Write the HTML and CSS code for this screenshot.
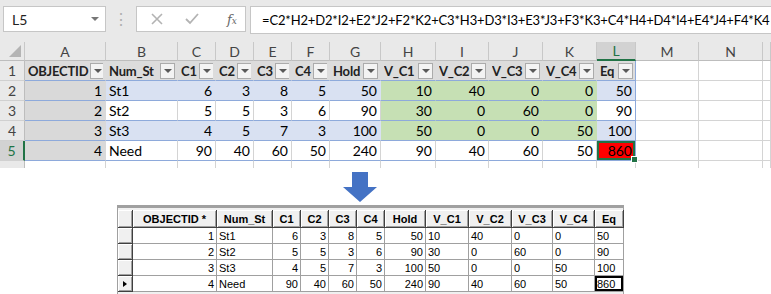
FILE: index.html
```html
<!DOCTYPE html>
<html lang="en">
  <head>
    <meta charset="UTF-8" />
    <title>Excel to Attribute Table</title>
    <link rel="stylesheet" href="styles.css">
  </head>
  <body>
    <div class="topbar">
      <div class="namebox">
        <span>L5</span>
        <span class="caret"></span>
      </div>
      <div class="dots">&#8942;</div>
      <div class="fxbox">
        <svg class="icon" width="12" height="12" viewBox="0 0 12 12">
          <path d="M1 1 L11 11 M11 1 L1 11" stroke="#b3b3b3" stroke-width="1.6" fill="none" />
        </svg>
        <svg class="icon" width="14" height="12" viewBox="0 0 14 12">
          <path d="M1 6 L5 10 L13 1" stroke="#b3b3b3" stroke-width="1.8" fill="none" />
        </svg>
        <span class="fx">f<sub>x</sub></span>
      </div>
      <div class="formula">=C2*H2+D2*I2+E2*J2+F2*K2+C3*H3+D3*I3+E3*J3+F3*K3+C4*H4+D4*I4+E4*J4+F4*K4</div>
    </div>

    <div class="sheet">
      <table class="grid">
        <colgroup>
          <col style="width: 25px" /><col style="width: 81px" /><col style="width: 72px" />
          <col style="width: 38px" /><col style="width: 38px" /><col style="width: 38px" />
          <col style="width: 38px" /><col style="width: 51px" /><col style="width: 55px" />
          <col style="width: 53px" /><col style="width: 54px" /><col style="width: 54px" />
          <col style="width: 39px" /><col style="width: 63px" /><col style="width: 64px" />
          <col style="width: 8px" />
        </colgroup>
        <tr class="colhdr">
          <th class="corner"><span class="tri"></span></th>
          <th>A</th><th>B</th><th>C</th><th>D</th><th>E</th><th>F</th><th>G</th>
          <th>H</th><th>I</th><th>J</th><th>K</th><th class="active">L</th><th>M</th><th>N</th><th></th>
        </tr>
        <tr class="head">
          <th class="rowhdr">1</th>
          <td class="fh"><div class="fhc">OBJECTID<span class="filter"></span></div></td>
          <td class="fh"><div class="fhc">Num_St<span class="filter"></span></div></td>
          <td class="fh"><div class="fhc">C1<span class="filter"></span></div></td>
          <td class="fh"><div class="fhc">C2<span class="filter"></span></div></td>
          <td class="fh"><div class="fhc">C3<span class="filter"></span></div></td>
          <td class="fh"><div class="fhc">C4<span class="filter"></span></div></td>
          <td class="fh"><div class="fhc">Hold<span class="filter"></span></div></td>
          <td class="fh"><div class="fhc">V_C1<span class="filter"></span></div></td>
          <td class="fh"><div class="fhc">V_C2<span class="filter"></span></div></td>
          <td class="fh"><div class="fhc">V_C3<span class="filter"></span></div></td>
          <td class="fh"><div class="fhc">V_C4<span class="filter"></span></div></td>
          <td class="fh last"><div class="fhc">Eq<span class="filter"></span></div></td>
          <td></td><td></td><td></td>
        </tr>
        <tr class="band">
          <th class="rowhdr">2</th>
          <td class="id num">1</td><td>St1</td>
          <td class="num">6</td><td class="num">3</td><td class="num">8</td><td class="num">5</td><td class="num">50</td>
          <td class="num v">10</td><td class="num v">40</td><td class="num v">0</td><td class="num v">0</td>
          <td class="num last">50</td>
          <td></td><td></td><td></td>
        </tr>
        <tr class="plain">
          <th class="rowhdr">3</th>
          <td class="id num">2</td><td>St2</td>
          <td class="num">5</td><td class="num">5</td><td class="num">3</td><td class="num">6</td><td class="num">90</td>
          <td class="num v">30</td><td class="num v">0</td><td class="num v">60</td><td class="num v">0</td>
          <td class="num last">90</td>
          <td></td><td></td><td></td>
        </tr>
        <tr class="band">
          <th class="rowhdr">4</th>
          <td class="id num">3</td><td>St3</td>
          <td class="num">4</td><td class="num">5</td><td class="num">7</td><td class="num">3</td><td class="num">100</td>
          <td class="num v">50</td><td class="num v">0</td><td class="num v">0</td><td class="num v">50</td>
          <td class="num last">100</td>
          <td></td><td></td><td></td>
        </tr>
        <tr class="plain">
          <th class="rowhdr active">5</th>
          <td class="id num">4</td><td>Need</td>
          <td class="num">90</td><td class="num">40</td><td class="num">60</td><td class="num">50</td><td class="num">240</td>
          <td class="num">90</td><td class="num">40</td><td class="num">60</td><td class="num">50</td>
          <td class="num last sel">860</td>
          <td></td><td></td><td></td>
        </tr>
        <tr class="empty">
          <th class="rowhdr"></th>
          <td></td><td></td><td></td><td></td><td></td><td></td><td></td><td></td>
          <td></td><td></td><td></td><td></td><td></td><td></td><td></td>
        </tr>
      </table>
    </div>

    <div class="lower">
      <svg class="arrow" width="34" height="30" viewBox="0 0 34 30">
        <polygon points="9,0 25,0 25,15 34,15 17,30 0,15 9,15" fill="#4472c4" />
      </svg>

      <div class="att-frame">
        <table class="att">
          <colgroup>
            <col style="width: 15px" /><col style="width: 84px" /><col style="width: 56px" />
            <col style="width: 28px" /><col style="width: 28px" /><col style="width: 28px" />
            <col style="width: 28px" /><col style="width: 41px" /><col style="width: 43px" />
            <col style="width: 43px" /><col style="width: 41px" /><col style="width: 42px" />
            <col style="width: 29px" />
          </colgroup>
          <tr>
            <th class="sel-col"></th>
            <th>OBJECTID *</th><th>Num_St</th><th>C1</th><th>C2</th><th>C3</th><th>C4</th>
            <th>Hold</th><th>V_C1</th><th>V_C2</th><th>V_C3</th><th>V_C4</th><th>Eq</th>
          </tr>
          <tr>
            <th class="sel-col"></th>
            <td class="num">1</td><td>St1</td>
            <td class="num">6</td><td class="num">3</td><td class="num">8</td><td class="num">5</td><td class="num">50</td>
            <td>10</td><td>40</td><td>0</td><td>0</td><td>50</td>
          </tr>
          <tr>
            <th class="sel-col"></th>
            <td class="num">2</td><td>St2</td>
            <td class="num">5</td><td class="num">5</td><td class="num">3</td><td class="num">6</td><td class="num">90</td>
            <td>30</td><td>0</td><td>60</td><td>0</td><td>90</td>
          </tr>
          <tr>
            <th class="sel-col"></th>
            <td class="num">3</td><td>St3</td>
            <td class="num">4</td><td class="num">5</td><td class="num">7</td><td class="num">3</td><td class="num">100</td>
            <td>50</td><td>0</td><td>0</td><td>50</td><td>100</td>
          </tr>
          <tr>
            <th class="sel-col current"><span class="marker"></span></th>
            <td class="num">4</td><td>Need</td>
            <td class="num">90</td><td class="num">40</td><td class="num">60</td><td class="num">50</td><td class="num">240</td>
            <td>90</td><td>40</td><td>60</td><td>50</td><td class="focus">860</td>
          </tr>
        </table>
      </div>
    </div>
  </body>
</html>
```

FILE: styles.css
```css
body {
  margin: 0;
  width: 771px;
  height: 294px;
  overflow: hidden;
  background: #fff;
  font-family: Lato, "Liberation Sans", sans-serif;
  color: #000;
}

/* formula bar */
.topbar {
  display: flex;
  align-items: flex-start;
  height: 42px;
  padding-top: 6px;
  box-sizing: border-box;
  background: #e9e9e9;
}
.namebox {
  display: flex;
  align-items: center;
  justify-content: space-between;
  width: 103px;
  height: 26px;
  margin-left: 3px;
  padding: 0 6px 0 8px;
  box-sizing: border-box;
  background: #fff;
  border: 1px solid #c6c6c6;
  font-size: 14px;
  color: #222;
}
.caret {
  width: 0;
  height: 0;
  border-left: 4px solid transparent;
  border-right: 4px solid transparent;
  border-top: 4px solid #777;
}
.dots {
  width: 30px;
  text-align: center;
  font-size: 16px;
  line-height: 26px;
  color: #b0b0b0;
}
.fxbox {
  display: flex;
  align-items: center;
  gap: 22px;
  width: 110px;
  height: 26px;
  padding-left: 14px;
  box-sizing: border-box;
  background: #fff;
  border: 1px solid #c6c6c6;
}
.fx {
  font-family: "DejaVu Serif", serif;
  font-style: italic;
  font-size: 13px;
  color: #666;
  margin-left: 6px;
}
.fx sub {
  font-size: 9px;
  vertical-align: 0;
}
.formula {
  flex: 1;
  height: 26px;
  margin-left: 4px;
  padding-left: 11px;
  background: #fff;
  border: 1px solid #c6c6c6;
  border-right: none;
  font-size: 13px;
  letter-spacing: -0.15px;
  line-height: 26px;
  white-space: nowrap;
  overflow: hidden;
}

/* worksheet */
.sheet {
  height: 126px;
  overflow: hidden;
}
.grid {
  table-layout: fixed;
  width: 771px;
  border-collapse: separate;
  border-spacing: 0;
  font-size: 14px;
}
.grid td,
.grid th {
  padding: 0 3px;
  border-right: 1px solid #d4d4d4;
  border-bottom: 1px solid #d4d4d4;
  white-space: nowrap;
  overflow: hidden;
  vertical-align: bottom;
  line-height: 18px;
}
.grid tr {
  height: 20px;
}
.colhdr {
  height: 19px !important;
}
.colhdr th {
  background: #e9e9e9;
  font-weight: normal;
  color: #444;
  text-align: center;
  vertical-align: middle;
  border-right: 1px solid #c8c8c8;
  border-bottom: 1px solid #bdbdbd;
  line-height: 17px;
}
.colhdr th.active {
  background: #d2d2d2;
  color: #217346;
  border-bottom: 2px solid #217346;
}
.corner {
  position: relative;
}
.tri {
  position: absolute;
  right: 3px;
  bottom: 3px;
  width: 0;
  height: 0;
  border-left: 12px solid transparent;
  border-bottom: 12px solid #b4b4b4;
}
.rowhdr {
  background: #e9e9e9;
  font-weight: normal;
  color: #444;
  text-align: center;
  border-right: 1px solid #bdbdbd !important;
  border-bottom: 1px solid #d0d0d0 !important;
}
.rowhdr.active {
  background: #d2d2d2;
  color: #217346;
  border-right: 2px solid #217346 !important;
}

.head td.fh {
  background: #dcdcdc;
  font-weight: bold;
  font-size: 13px;
  letter-spacing: -0.2px;
  color: #222;
  border-right-color: #dcdcdc;
  border-bottom-color: #8eaadb;
  padding-right: 2px;
}
.fhc {
  display: flex;
  align-items: center;
  gap: 2px;
  overflow: hidden;
}
.filter {
  flex: none;
  position: relative;
  width: 13px;
  height: 14px;
  margin-left: auto;
  background: #f3f3f3;
  border: 1px solid #ababab;
}
.filter::after {
  content: "";
  position: absolute;
  left: 3px;
  top: 5px;
  border-left: 4px solid transparent;
  border-right: 4px solid transparent;
  border-top: 4px solid #595959;
}

.num {
  text-align: right;
}
.grid .band td,
.grid .plain td,
.grid .head td {
  border-bottom-color: #8eaadb;
}
.band td {
  background: #d9e1f2;
  border-right-color: #d9e1f2 !important;
}
.grid td.id {
  background: #d9d9d9;
  border-right-color: #d9d9d9 !important;
}
.grid td.v {
  background: #c6e0b4;
  border-right-color: #c6e0b4 !important;
}
.grid td.last {
  border-right: 1px solid #8eaadb !important;
}
.band td:nth-last-child(-n+3),
.plain td:nth-last-child(-n+3),
.head td:nth-last-child(-n+3) {
  background: #fff;
  border-right-color: #d4d4d4 !important;
  border-bottom-color: #d4d4d4;
}
.grid td.sel {
  position: relative;
  overflow: visible;
  background: #ff0000;
  box-shadow: inset 0 0 0 2px #217346;
}
.grid td.sel::after {
  content: "";
  position: absolute;
  right: -3px;
  bottom: -3px;
  width: 5px;
  height: 5px;
  background: #217346;
  border: 1px solid #fff;
}

/* arrow + attribute table */
.lower {
  display: flex;
  flex-direction: column;
  padding-left: 117px;
}
.arrow {
  margin: 4px 0 0 226px;
}
.att-frame {
  width: 507px;
  margin-top: 3px;
  border-top: 3px solid #a0a0a0;
  border-left: 1px solid #a0a0a0;
  border-right: 1px solid #a0a0a0;
  background: #f0f0f0;
  padding-top: 2px;
  box-sizing: border-box;
  height: 92px;
}
.att {
  table-layout: fixed;
  width: 506px;
  border-collapse: separate;
  border-spacing: 0;
  font-family: "Liberation Sans", Arial, sans-serif;
  font-size: 11px;
}
.att tr {
  height: 16px;
}
.att tr:first-child {
  height: 18px;
}
.att th {
  background: #f0f0f0;
  font-weight: bold;
  text-align: center;
  padding: 0 2px;
  border-right: 1px solid #404040;
  border-bottom: 1px solid #404040;
  box-shadow: inset 1px 1px 0 #fff, inset -1px -1px 0 #a0a0a0;
  white-space: nowrap;
  overflow: hidden;
}
.att td {
  background: #fff;
  padding: 0 2px;
  border-right: 1px solid #a0a0a0;
  border-bottom: 1px solid #a0a0a0;
  white-space: nowrap;
  overflow: hidden;
}
.att td.focus {
  box-shadow: inset 0 0 0 2px #000;
}
.sel-col {
  position: relative;
}
.marker {
  position: absolute;
  left: 5px;
  top: 5px;
  border-top: 3px solid transparent;
  border-bottom: 3px solid transparent;
  border-left: 4px solid #000;
}
```
